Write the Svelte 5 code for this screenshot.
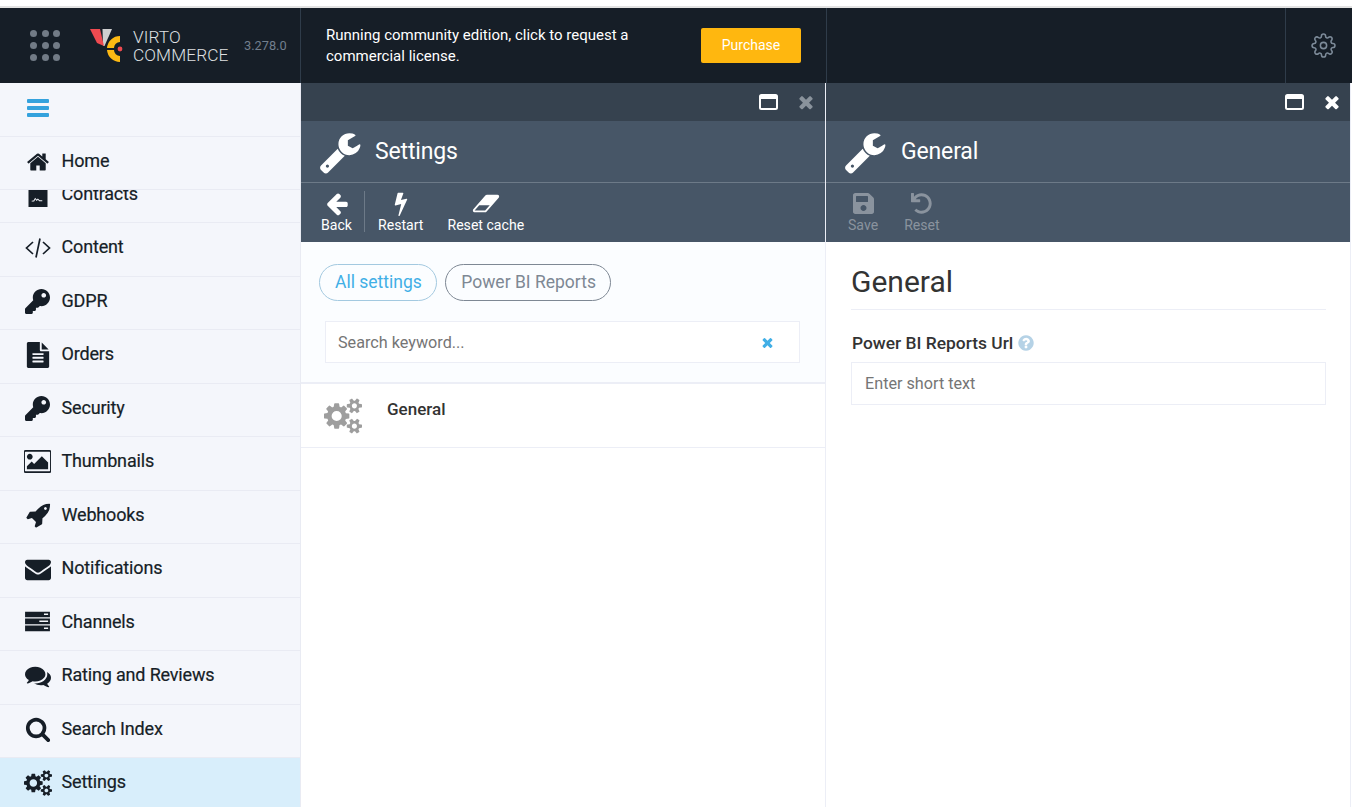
<script>
  const p = {
    home: "M1472 992v480q0 26-19 45t-45 19h-384v-384h-256v384h-384q-26 0-45-19t-19-45v-480q0-1 .5-3t.5-3l575-474 575 474q1 2 1 6zm223-69l-62 74q-8 9-21 11h-3q-13 0-21-7l-692-577-692 577q-12 8-24 7-13-2-21-11l-62-74q-8-10-7-23.5t11-21.5l719-599q32-26 76-26t76 26l244 204v-195q0-14 9-23t23-9h192q14 0 23 9t9 23v408l219 182q10 8 11 21.5t-7 23.5z",
    key: "M512 176.001C512 273.203 433.202 352 336 352c-11.22 0-22.19-1.062-32.827-3.069l-24.012 27.014A23.999 23.999 0 0 1 261.223 384H224v40c0 13.255-10.745 24-24 24h-40v40c0 13.255-10.745 24-24 24H24c-13.255 0-24-10.745-24-24v-78.059c0-6.365 2.529-12.47 7.029-16.971l161.802-161.802C163.108 213.814 160 195.271 160 176 160 78.798 238.797.001 335.999 0 433.488-.001 512 78.511 512 176.001zM336 128c0 26.51 21.49 48 48 48s48-21.49 48-48-21.49-48-48-48-48 21.49-48 48z",
    file: "M1596 476q14 14 28 36h-472v-472q22 14 36 28zm-476 164h544v1056q0 40-28 68t-68 28h-1344q-40 0-68-28t-28-68v-1600q0-40 28-68t68-28h800v544q0 40 28 68t68 28zm160 736v-64q0-14-9-23t-23-9h-704q-14 0-23 9t-9 23v64q0 14 9 23t23 9h704q14 0 23-9t9-23zm0-256v-64q0-14-9-23t-23-9h-704q-14 0-23 9t-9 23v64q0 14 9 23t23 9h704q14 0 23-9t9-23zm0-256v-64q0-14-9-23t-23-9h-704q-14 0-23 9t-9 23v64q0 14 9 23t23 9h704q14 0 23-9t9-23z",
    picture: "M576 576q0 80-56 136t-136 56-136-56-56-136 56-136 136-56 136 56 56 136zm1024 384v448h-1408v-192l320-320 160 160 512-512zm96-704h-1600q-13 0-22.5 9.5t-9.5 22.5v1216q0 13 9.5 22.5t22.5 9.5h1600q13 0 22.5-9.5t9.5-22.5v-1216q0-13-9.5-22.5t-22.5-9.5zm160 32v1216q0 66-47 113t-113 47h-1600q-66 0-113-47t-47-113v-1216q0-66 47-113t113-47h1600q66 0 113 47t47 113z",
    rocket: "M1504 448q0-40-28-68t-68-28-68 28-28 68 28 68 68 28 68-28 28-68zm224-288q0 249-75.5 430.5t-253.5 360.5q-81 80-195 176l-20 379q-2 16-16 26l-384 224q-7 4-16 4-12 0-23-9l-64-64q-13-14-8-32l85-276-281-281-276 85q-3 1-9 1-14 0-23-9l-64-64q-17-19-5-39l224-384q10-14 26-16l379-20q96-114 176-195 188-187 358-258t431-71q14 0 24 9.5t10 22.5z",
    envelope: "M1792 710v794q0 66-47 113t-113 47h-1472q-66 0-113-47t-47-113v-794q44 49 101 87 362 246 497 345 57 42 92.5 65.5t94.5 48 110 24.5h2q51 0 110-24.5t94.5-48 92.5-65.5q170-123 498-345 57-39 100-87zm0-294q0 79-49 151t-122 123q-376 261-468 325-10 7-42.5 30.5t-54 38-52 32.5-57.5 27-50 9h-2q-23 0-50-9t-57.5-27-52-32.5-54-38-42.5-30.5q-91-64-262-182.5t-205-142.5q-62-42-117-115.5t-55-136.5q0-78 41.5-130t118.5-52h1472q65 0 112.5 47t47.5 113z",
    comments: "M1408 768q0 139-94 257t-256.5 186.5-353.5 68.5q-86 0-176-16-124 88-278 128-36 9-86 16h-3q-11 0-20.5-8t-11.5-21q-1-3-1-6.5t.5-6.5 2-6l2.5-5 3.5-5.5 4-5 4.5-5 4-4.5q5-6 23-25t26-29.5 22.5-29 25-38.5 20.5-44q-124-72-195-177t-71-224q0-139 94-257t256.5-186.5 353.5-68.5 353.5 68.5 256.5 186.5 94 257zm384 256q0 120-71 224.5t-195 176.5q10 24 20.5 44t25 38.5 22.5 29 26 29.5 23 25q1 1 4 4.5t4.5 5 4 5 3.5 5.5l2.5 5 2 6 .5 6.5-1 6.5q-3 14-13 22t-22 7q-50-7-86-16-154-40-278-128-90 16-176 16-271 0-472-132 58 4 88 4 161 0 309-45t264-129q125-92 192-212t67-254q0-77-23-152 129 71 204 178t75 230z",
    search: "M1216 832q0-185-131.5-316.5t-316.5-131.5-316.5 131.5-131.5 316.5 131.5 316.5 316.5 131.5 316.5-131.5 131.5-316.5zm512 832q0 52-38 90t-90 38q-54 0-90-38l-343-342q-179 124-399 124-143 0-273.5-55.5t-225-150-150-225-55.5-273.5 55.5-273.5 150-225 225-150 273.5-55.5 273.5 55.5 225 150 150 225 55.5 273.5q0 220-124 399l343 343q37 37 37 90z",
    cogs: "M896 896q0-106-75-181t-181-75-181 75-75 181 75 181 181 75 181-75 75-181zm768 512q0-52-38-90t-90-38-90 38-38 90q0 53 37.5 90.5t90.5 37.5 90.5-37.5 37.5-90.5zm0-1024q0-52-38-90t-90-38-90 38-38 90q0 53 37.5 90.5t90.5 37.5 90.5-37.5 37.5-90.5zm-384 421v185q0 10-7 19.5t-16 10.5l-155 24q-11 35-32 76 34 48 90 115 7 11 7 20 0 12-7 19-23 30-82.5 89.5t-78.5 59.5q-11 0-21-7l-115-90q-37 19-77 31-11 108-23 155-7 24-30 24h-186q-11 0-20-7.5t-10-17.5l-23-153q-34-10-75-31l-118 89q-7 7-20 7-11 0-21-8-144-133-144-160 0-9 7-19 10-14 41-53t47-61q-23-44-35-82l-152-24q-10-1-17-9.5t-7-19.5v-185q0-10 7-19.5t16-10.5l155-24q11-35 32-76-34-48-90-115-7-11-7-20 0-12 7-20 22-30 82-89t79-59q11 0 21 7l115 90q34-18 77-32 11-108 23-154 7-24 30-24h186q11 0 20 7.5t10 17.5l23 153q34 10 75 31l118-89q8-7 20-7 11 0 21 8 144 133 144 160 0 8-7 19-12 16-42 54t-45 60q23 48 34 82l152 23q10 2 17 10.5t7 19.5zm640 533v140q0 16-149 31-12 27-30 52 51 113 51 138 0 4-4 7-122 71-124 71-8 0-46-47t-52-68q-20 2-30 2t-30-2q-14 21-52 68t-46 47q-2 0-124-71-4-3-4-7 0-25 51-138-18-25-30-52-149-15-149-31v-140q0-16 149-31 13-29 30-52-51-113-51-138 0-4 4-7 4-2 35-20t59-34 30-16q8 0 46 46.5t52 67.5q20-2 30-2t30 2q51-71 92-112l6-2q4 0 124 70 4 3 4 7 0 25-51 138 17 23 30 52 149 15 149 31zm0-1024v140q0 16-149 31-12 27-30 52 51 113 51 138 0 4-4 7-122 71-124 71-8 0-46-47t-52-68q-20 2-30 2t-30-2q-14 21-52 68t-46 47q-2 0-124-71-4-3-4-7 0-25 51-138-18-25-30-52-149-15-149-31v-140q0-16 149-31 13-29 30-52-51-113-51-138 0-4 4-7 4-2 35-20t59-34 30-16q8 0 46 46.5t52 67.5q20-2 30-2t30 2q51-71 92-112l6-2q4 0 124 70 4 3 4 7 0 25-51 138 17 23 30 52 149 15 149 31z",
    wrench: "M448 1472q0-26-19-45t-45-19-45 19-19 45 19 45 45 19 45-19 19-45zm644-420l-682 682q-37 37-90 37-52 0-91-37l-106-108q-38-36-38-90 0-53 38-91l681-681q39 98 114.5 173.5t173.5 114.5zm634-435q0 39-23 106-47 134-164.5 217.5t-258.5 83.5q-185 0-316.5-131.5t-131.5-316.5 131.5-316.5 316.5-131.5q58 0 121.5 16.5t107.5 46.5q16 11 16 28t-16 28l-293 169v224l193 107q5-3 79-48.5t135.5-81 70.5-35.5q15 0 23.5 10t8.5 25z",
    times: "M1490 1322q0 40-28 68l-136 136q-28 28-68 28t-68-28l-294-294-294 294q-28 28-68 28t-68-28l-136-136q-28-28-28-68t28-68l294-294-294-294q-28-28-28-68t28-68l136-136q28-28 68-28t68 28l294 294 294-294q28-28 68-28t68 28l136 136q28 28 28 68t-28 68l-294 294 294 294q28 28 28 68z",
    back: "M1664 896v128q0 53-32.5 90.5t-84.5 37.5h-704l293 294q38 36 38 90t-38 90l-75 76q-37 37-90 37-52 0-91-37l-651-652q-37-37-37-90 0-52 37-91l651-650q38-38 91-38 52 0 90 38l75 74q38 38 38 91t-38 91l-293 293h704q52 0 84.5 37.5t32.5 90.5z",
    bolt: "M1333 566q18 20 7 44l-540 1157q-13 25-42 25-4 0-14-2-17-5-25.5-19t-4.5-30l197-808-406 101q-4 1-12 1-18 0-31-11-18-15-13-39l201-825q4-14 16-23t28-9h328q19 0 32 12.5t13 29.5q0 8-5 18l-171 463 396-98q8-2 12-2 19 0 34 15z",
    eraser: "M960 1408l336-384h-768l-336 384h768zm1013-1077q15 34 9.5 71.5t-30.5 65.5l-896 1024q-38 44-96 44h-768q-38 0-69.5-20.5t-47.5-54.5q-15-34-9.5-71.5t30.5-65.5l896-1024q38-44 96-44h768q38 0 70 20.5t47 54.5z",
    question: "M1024 1376v-192q0-14-9-23t-23-9h-192q-14 0-23 9t-9 23v192q0 14 9 23t23 9h192q14 0 23-9t9-23zm256-672q0-88-55.5-163t-138.5-116-170-41q-243 0-371 213-15 24 8 42l132 100q7 6 19 6 16 0 25-12 53-68 86-92 34-24 86-24 48 0 85.5 26t37.5 59q0 38-20 61t-68 45q-63 28-115.5 86.5t-52.5 125.5v36q0 14 9 23t23 9h192q14 0 23-9t9-23q0-19 21.5-49.5t54.5-49.5q32-18 49-28.5t46-35 44.5-48 28-60.5 12.5-81zm384 192q0 209-103 385.5t-279.5 279.5-385.5 103-385.5-103-279.5-279.5-103-385.5 103-385.5 279.5-279.5 385.5-103 385.5 103 279.5 279.5 103 385.5z",
    server: "M128 224h1536v352H128zM1296 336v96h256v-96zM128 656h1536v352H128zM1008 768v96h544v-96zM128 1088h1536v352H128zM1296 1200v96h256v-96z",
    contract: "M241 0h1310v1792H241zM460 1420l170-10 80-150 90 110 90-70 90 90h210v-70h-180l-120-110-90 70-100-130-110 200-130 10z"
  };

  const navItems = [
    { label: "Contracts", d: p.contract },
    { label: "Content", code: true },
    { label: "GDPR", d: p.key, size: 25, box: "0 0 512 512" },
    { label: "Orders", d: p.file },
    { label: "Security", d: p.key, size: 25, box: "0 0 512 512" },
    { label: "Thumbnails", d: p.picture, size: 27 },
    { label: "Webhooks", d: p.rocket },
    { label: "Notifications", d: p.envelope },
    { label: "Channels", d: p.server, size: 29 },
    { label: "Rating and Reviews", d: p.comments },
    { label: "Search Index", d: p.search },
    { label: "Settings", d: p.cogs, box: "0 0 1920 1792", size: 28, active: true }
  ];
</script>

{#snippet fa(d, size = 26, box = "0 0 1792 1792")}
  <svg width={size} height={size} viewBox={box} fill="currentColor" aria-hidden="true"><path {d} /></svg>
{/snippet}

{#snippet windowIcon()}
  <svg width="19" height="16" viewBox="0 0 19 16" aria-hidden="true">
    <rect x="1" y="1" width="17" height="14" rx="1.5" fill="none" stroke="#fff" stroke-width="2" />
    <rect x="1" y="1" width="17" height="4" fill="#fff" />
  </svg>
{/snippet}

<div class="page">
  <div class="browser-strip"></div>

  <header class="topbar">
    <div class="brand">
      <div class="dots">
        {#each Array(9) as _}<i></i>{/each}
      </div>
      <svg class="logo" width="33" height="34" viewBox="0 0 33 34" aria-hidden="true">
        <polygon points="12.5,1 22,1 14.5,18 13,18" fill="#cfcfcf" />
        <polygon points="0,1 10,1 14,18 7,15" fill="#ef4a50" />
        <path d="M30 8A13 13 0 0 0 17 20L24 20A6 6 0 0 1 30 14Z" fill="#fdb913" />
        <path d="M30 34A13 13 0 0 1 17 22L24 22A6 6 0 0 0 30 28Z" fill="#fdb913" />
        <circle cx="30" cy="21" r="2.4" fill="#ef4a50" />
      </svg>
      <div class="wordmark">VIRTO<br />COMMERCE</div>
      <span class="version">3.278.0</span>
    </div>
    <div class="license">
      <p>Running community edition, click to request a commercial license.</p>
      <button class="purchase">Purchase</button>
    </div>
    <div class="spacer"></div>
    <div class="gear">
      <svg width="25" height="25" viewBox="0 0 24 24" fill="none" stroke="#7d8b99" stroke-width="1.5" stroke-linecap="round" stroke-linejoin="round" aria-hidden="true">
        <circle cx="12" cy="12" r="3" />
        <path d="M19.4 15a1.65 1.65 0 0 0 .33 1.82l.06.06a2 2 0 0 1 0 2.83 2 2 0 0 1-2.83 0l-.06-.06a1.65 1.65 0 0 0-1.82-.33 1.65 1.65 0 0 0-1 1.51V21a2 2 0 0 1-2 2 2 2 0 0 1-2-2v-.09A1.65 1.65 0 0 0 9 19.4a1.65 1.65 0 0 0-1.82.33l-.06.06a2 2 0 0 1-2.83 0 2 2 0 0 1 0-2.83l.06-.06a1.65 1.65 0 0 0 .33-1.82 1.65 1.65 0 0 0-1.51-1H3a2 2 0 0 1-2-2 2 2 0 0 1 2-2h.09A1.65 1.65 0 0 0 4.6 9a1.65 1.65 0 0 0-.33-1.82l-.06-.06a2 2 0 0 1 0-2.83 2 2 0 0 1 2.83 0l.06.06a1.65 1.65 0 0 0 1.82.33H9a1.65 1.65 0 0 0 1-1.51V3a2 2 0 0 1 2-2 2 2 0 0 1 2 2v.09a1.65 1.65 0 0 0 1 1.51 1.65 1.65 0 0 0 1.82-.33l.06-.06a2 2 0 0 1 2.83 0 2 2 0 0 1 0 2.83l-.06.06a1.65 1.65 0 0 0-.33 1.82V9a1.65 1.65 0 0 0 1.51 1H21a2 2 0 0 1 2 2 2 2 0 0 1-2 2h-.09a1.65 1.65 0 0 0-1.51 1z" />
      </svg>
    </div>
  </header>

  <div class="workspace">
    <nav class="sidebar">
      <div class="burger-row">
        <span class="burger"><i></i><i></i><i></i></span>
      </div>
      <div class="nav-row pinned">
        <span class="nav-icon">{@render fa(p.home, 24)}</span>
        <span>Home</span>
      </div>
      <div class="nav-scroll">
        <div class="nav-list">
          {#each navItems as item}
            <div class="nav-row" class:active={item.active}>
              <span class="nav-icon">
                {#if item.code}
                  <svg width="26" height="22" viewBox="0 0 26 22" fill="none" stroke="currentColor" stroke-width="1.7" aria-hidden="true">
                    <path d="M8 5 L1.5 11 L8 17" /><path d="M18 5 L24.5 11 L18 17" /><path d="M15 1.5 L11 20.5" />
                  </svg>
                {:else}
                  {@render fa(item.d, item.size ?? 26, item.box ?? "0 0 1792 1792")}
                {/if}
              </span>
              <span>{item.label}</span>
            </div>
          {/each}
        </div>
      </div>
    </nav>

    <section class="blade first">
      <div class="blade-ctrl">
        {@render windowIcon()}
        <span class="ctrl-close dim">{@render fa(p.times, 20)}</span>
      </div>
      <div class="blade-head">
        <span class="wrench">{@render fa(p.wrench, 44)}</span>
        <h2>Settings</h2>
      </div>
      <div class="toolbar">
        <div class="tool back">
          {@render fa(p.back, 26)}
          <span>Back</span>
        </div>
        <div class="tool restart">
          {@render fa(p.bolt, 26)}
          <span>Restart</span>
        </div>
        <div class="tool">
          {@render fa(p.eraser, 28, "0 0 2048 1792")}
          <span>Reset cache</span>
        </div>
      </div>
      <div class="filters">
        <div class="chips">
          <span class="chip all">All settings</span>
          <span class="chip group">Power BI Reports</span>
        </div>
        <div class="search">
          <span>Search keyword...</span>
          <span class="clear">{@render fa(p.times, 15)}</span>
        </div>
      </div>
      <div class="list-row">
        <span class="list-icon">{@render fa(p.cogs, 38, "0 0 1920 1792")}</span>
        <span class="list-name">General</span>
      </div>
    </section>

    <section class="blade second">
      <div class="blade-ctrl">
        {@render windowIcon()}
        <span class="ctrl-close">{@render fa(p.times, 20)}</span>
      </div>
      <div class="blade-head">
        <span class="wrench">{@render fa(p.wrench, 44)}</span>
        <h2>General</h2>
      </div>
      <div class="toolbar disabled">
        <div class="tool">
          <svg width="21" height="25" viewBox="0 0 448 512" fill="currentColor" aria-hidden="true"><path d="M433.941 129.941l-83.882-83.882A48 48 0 0 0 316.118 32H48C21.49 32 0 53.49 0 80v352c0 26.51 21.49 48 48 48h352c26.51 0 48-21.49 48-48V163.882a48 48 0 0 0-14.059-33.941zM224 416c-35.346 0-64-28.654-64-64 0-35.346 28.654-64 64-64s64 28.654 64 64c0 35.346-28.654 64-64 64zm96-304.52V212c0 6.627-5.373 12-12 12H76c-6.627 0-12-5.373-12-12V108c0-6.627 5.373-12 12-12h228.52c3.183 0 6.235 1.264 8.485 3.515l3.48 3.48A11.996 11.996 0 0 1 320 111.48z" /></svg>
          <span>Save</span>
        </div>
        <div class="tool">
          <svg width="21" height="25" viewBox="0 0 512 512" fill="currentColor" aria-hidden="true"><path d="M212.333 224.333H12c-6.627 0-12-5.373-12-12V12C0 5.373 5.373 0 12 0h48c6.627 0 12 5.373 12 12v78.112C117.773 39.279 184.26 7.47 258.175 8.007c136.906.994 246.448 111.623 246.157 248.532C504.041 393.258 393.12 504 256.333 504c-64.089 0-122.496-24.313-166.51-64.215-5.099-4.622-5.334-12.554-.467-17.42l33.967-33.967c4.474-4.474 11.662-4.717 16.401-.525C170.76 415.336 211.58 432 256.333 432c97.268 0 176-78.716 176-176 0-97.267-78.716-176-176-176-58.496 0-110.28 28.476-142.274 72.333h98.274c6.627 0 12 5.373 12 12v48c0 6.627-5.373 12-12 12z" /></svg>
          <span>Reset</span>
        </div>
      </div>
      <div class="form">
        <h3>General</h3>
        <div class="field-label">
          Power BI Reports Url
          <span class="help">{@render fa(p.question, 18)}</span>
        </div>
        <div class="text-input">Enter short text</div>
      </div>
    </section>
  </div>
</div>

<style>
  :global(body) {
    margin: 0;
    background: #fff;
    font-family: Roboto, "Liberation Sans", sans-serif;
  }
  * {
    box-sizing: border-box;
  }
  svg {
    display: block;
    flex: none;
  }
  .page {
    width: 1352px;
    height: 807px;
    overflow: hidden;
    display: flex;
    flex-direction: column;
  }
  .browser-strip {
    height: 8px;
    background: #fff;
    border-bottom: 2px solid #e3e3e3;
    flex: none;
  }

  .topbar {
    height: 75px;
    flex: none;
    display: flex;
    background: #161e27;
    color: #fff;
  }
  .brand {
    width: 301px;
    display: flex;
    align-items: center;
    padding-left: 30px;
    border-right: 1px solid #2f3c4a;
  }
  .dots {
    display: grid;
    grid-template-columns: repeat(3, 7px);
    gap: 4.7px;
    margin-right: 29.6px;
  }
  .dots i {
    width: 7px;
    height: 7px;
    border-radius: 50%;
    background: #727b86;
  }
  .logo {
    margin-top: -1px;
  }
  .wordmark {
    margin-left: 10px;
    font-size: 17.3px;
    line-height: 18px;
    font-weight: 300;
    color: #dfe0e2;
    width: 94px;
    white-space: nowrap;
    letter-spacing: 0.1px;
  }
  .version {
    margin-left: 17px;
    font-size: 12.8px;
    color: #727f8d;
  }
  .license {
    width: 526px;
    display: flex;
    align-items: center;
    justify-content: space-between;
    padding: 0 25px;
    border-right: 1px solid #2f3c4a;
  }
  .license p {
    margin: 0;
    width: 320px;
    font-size: 15px;
    line-height: 21px;
  }
  .purchase {
    width: 100px;
    height: 35px;
    flex: none;
    border: 0;
    border-radius: 2px;
    padding: 0 0 2px;
    background: #ffb70f;
    color: #fff;
    font: 14px Roboto, sans-serif;
  }
  .spacer {
    flex: 1;
  }
  .gear {
    width: 67px;
    display: flex;
    align-items: center;
    justify-content: center;
    padding-left: 9px;
    border-left: 1px solid #2f3c4a;
  }

  .workspace {
    flex: 1;
    display: flex;
    min-height: 0;
  }
  .sidebar {
    width: 301px;
    flex: none;
    display: flex;
    flex-direction: column;
    background: #f4f6fb;
    border-right: 1px solid #e9ebf3;
    color: #161e27;
  }
  .burger-row {
    height: 54px;
    flex: none;
    padding: 16px 0 0 27px;
    border-bottom: 1px solid #e9ebf3;
  }
  .burger {
    display: flex;
    flex-direction: column;
    gap: 3px;
    width: 22px;
  }
  .burger i {
    height: 4px;
    background: #34a2dd;
    border-radius: 1px;
  }
  .nav-row {
    height: 53.5px;
    flex: none;
    display: flex;
    align-items: flex-start;
    padding-top: 10px;
    font-size: 18px;
    line-height: 27px;
    letter-spacing: -0.17px;
    -webkit-text-stroke: 0.2px #161e27;
    border-bottom: 1px solid #e9ebf3;
    background: #f4f6fb;
  }
  .nav-row.pinned {
    height: 53px;
  }
  .nav-row.active {
    background: #d8eefb;
    border-bottom: 0;
  }
  .nav-icon {
    width: 61.5px;
    height: 28px;
    flex: none;
    display: flex;
    align-items: center;
    justify-content: center;
    padding: 1px 6.5px 0 20px;
  }
  .nav-scroll {
    flex: 1;
    overflow: hidden;
    min-height: 0;
  }
  .nav-list {
    margin-top: -20.5px;
  }

  .blade {
    width: 525px;
    flex: none;
    display: flex;
    flex-direction: column;
    border-right: 1px solid #eceef6;
    background: #fff;
  }
  .blade-ctrl {
    height: 38px;
    flex: none;
    display: flex;
    align-items: center;
    justify-content: flex-end;
    gap: 18px;
    padding-right: 9px;
    background: #36424f;
    color: #fff;
  }
  .second .blade-ctrl {
    padding-right: 8px;
  }
  .ctrl-close.dim {
    color: #8a939c;
  }
  .blade-head {
    height: 62px;
    flex: none;
    display: flex;
    align-items: center;
    padding-left: 17px;
    background: #475667;
    border-bottom: 1px solid #6d7a88;
    color: #fff;
  }
  .wrench {
    width: 57px;
    flex: none;
  }
  h2 {
    margin: 0;
    font-size: 23px;
    font-weight: 400;
    line-height: 30px;
    letter-spacing: -0.15px;
  }
  .second h2 {
    margin-left: 1px;
  }
  .toolbar {
    height: 59px;
    flex: none;
    display: flex;
    padding: 8px 0 0 8px;
    background: #475667;
    color: #fff;
  }
  .tool {
    display: flex;
    flex-direction: column;
    align-items: center;
    padding: 0 12px;
    font-size: 14.1px;
    line-height: 18px;
    height: 41px;
  }
  .tool svg {
    height: 25px;
  }
  .tool.back {
    width: 56px;
    padding: 0;
    border-right: 1px solid #6d7a88;
  }
  .tool.restart {
    margin-left: 1px;
  }
  .toolbar.disabled {
    color: #8a939e;
    padding-left: 10px;
    gap: 2px;
  }
  .filters {
    height: 142px;
    flex: none;
    background: #fbfdff;
    border-bottom: 2px solid #eceef6;
    padding: 22px 25px 0 18px;
  }
  .chips {
    display: flex;
    gap: 8px;
  }
  .chip {
    height: 37px;
    display: flex;
    align-items: center;
    padding: 0 14.5px 2px 15px;
    border-radius: 18.5px;
    font-size: 17.5px;
    border: 1px solid #a3c9e0;
    color: #41afe6;
  }
  .chip.group {
    border-color: #7e8894;
    color: #7e8894;
  }
  .search {
    height: 42px;
    margin: 20px 0 0 6px;
    display: flex;
    align-items: center;
    justify-content: space-between;
    padding: 0 24px 0 12px;
    border: 1px solid #eceef6;
    background: #fff;
    font-size: 16.2px;
    color: #757575;
  }
  .clear {
    color: #41afe6;
  }
  .list-row {
    height: 64px;
    flex: none;
    display: flex;
    align-items: flex-start;
    border-bottom: 1px solid #eceef6;
    padding: 13px 0 0 23px;
  }
  .list-icon {
    width: 63px;
    flex: none;
    color: #9e9e9e;
  }
  .list-name {
    font-size: 17px;
    font-weight: 500;
    color: #333;
    line-height: 24px;
  }
  .form {
    padding: 21px 24px 0 25px;
  }
  h3 {
    margin: 0;
    font-size: 30px;
    font-weight: 400;
    line-height: 38px;
    padding-bottom: 8px;
    color: #333;
    border-bottom: 1px solid #eceef6;
  }
  .field-label {
    display: flex;
    align-items: center;
    gap: 4px;
    margin-top: 21px;
    padding-left: 1px;
    font-size: 17.4px;
    font-weight: 500;
    line-height: 24px;
    color: #333;
  }
  .help {
    color: #b5d2e6;
  }
  .text-input {
    height: 43px;
    margin-top: 7px;
    display: flex;
    align-items: center;
    padding-left: 13px;
    border: 1px solid #eceef6;
    font-size: 16.2px;
    color: #757575;
  }
</style>
